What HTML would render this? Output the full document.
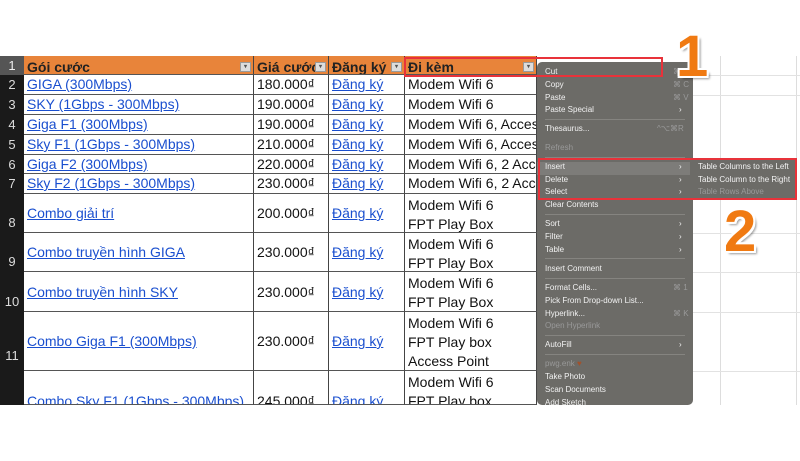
<!DOCTYPE html>
<html><head><meta charset="utf-8"><style>
body{margin:0;width:800px;height:450px;background:#fff;position:relative;overflow:hidden;font-family:"Liberation Sans",sans-serif}
.a{position:absolute}
.sheet{left:0;top:56px;width:800px;height:349px;background:#fff;overflow:hidden}
.rh{background:#1a1a1a;color:#ddd;font-size:13px;text-align:center;left:0;width:24px}
.c{font-size:14px;color:#111;white-space:nowrap;overflow:hidden;box-sizing:border-box;border-right:1px solid #444;border-bottom:1px solid #555;padding-left:3px;line-height:19px}
.l{color:#1a4fcf;text-decoration:underline}
.h{background:#e8843a;font-weight:bold;color:#222}
.menu{left:537px;top:62px;width:156px;height:343px;background:#6c6b67;border-radius:5px;color:#f2f2f2;font-size:8px}
.menu div{position:absolute;left:8px;white-space:nowrap}
.dim{color:#999!important}
.sep{height:1px;background:#858480;left:8px!important;width:140px}
.ar{left:142px!important}
.sc{left:136px!important;color:#999}
.num{position:absolute;font-size:58px;font-weight:bold;color:#f07a12;font-family:"Liberation Sans",sans-serif;line-height:1;
text-shadow:2px 0 #fff,-2px 0 #fff,0 2px #fff,0 -2px #fff,2px 2px #fff,-2px -2px #fff,2px -2px #fff,-2px 2px #fff,3px 3px 2px rgba(0,0,0,.4)}
</style></head><body>
<div class="a sheet">
<div class="a" style="left:720px;top:0;width:1px;height:349px;background:#ddd"></div>
<div class="a" style="left:796px;top:0;width:1px;height:349px;background:#ddd"></div>
<div class="a" style="left:693px;top:19px;width:107px;height:1px;background:#e2e2e2"></div>
<div class="a" style="left:693px;top:39px;width:107px;height:1px;background:#e2e2e2"></div>
<div class="a" style="left:693px;top:177px;width:107px;height:1px;background:#e2e2e2"></div>
<div class="a" style="left:693px;top:216px;width:107px;height:1px;background:#e2e2e2"></div>
<div class="a" style="left:693px;top:256px;width:107px;height:1px;background:#e2e2e2"></div>
<div class="a" style="left:693px;top:315px;width:107px;height:1px;background:#e2e2e2"></div>
</div>
<div id="t"></div>
<script>
var rows=[[56,19,"Gói cước","Giá cước","Đăng ký","Đi kèm",1],
[75,20,"GIGA (300Mbps)","180.000₫","Đăng ký","Modem Wifi 6"],
[95,20,"SKY (1Gbps - 300Mbps)","190.000₫","Đăng ký","Modem Wifi 6"],
[115,20,"Giga F1 (300Mbps)","190.000₫","Đăng ký","Modem Wifi 6, Access Point"],
[135,20,"Sky F1 (1Gbps - 300Mbps)","210.000₫","Đăng ký","Modem Wifi 6, Access Point"],
[155,19,"Giga F2 (300Mbps)","220.000₫","Đăng ký","Modem Wifi 6, 2 Access Point"],
[174,20,"Sky F2 (1Gbps - 300Mbps)","230.000₫","Đăng ký","Modem Wifi 6, 2 Access Point"],
[194,39,"Combo giải trí","200.000₫","Đăng ký","Modem Wifi 6<br>FPT Play Box"],
[233,39,"Combo truyền hình GIGA","230.000₫","Đăng ký","Modem Wifi 6<br>FPT Play Box"],
[272,40,"Combo truyền hình SKY","230.000₫","Đăng ký","Modem Wifi 6<br>FPT Play Box"],
[312,59,"Combo Giga F1 (300Mbps)","230.000₫","Đăng ký","Modem Wifi 6<br>FPT Play box<br>Access Point"],
[371,60,"Combo Sky F1 (1Gbps - 300Mbps)","245.000₫","Đăng ký","Modem Wifi 6<br>FPT Play box<br>Access Point"]];
var cols=[[24,230],[254,75],[329,76],[405,132]];var s="";
rows.forEach(function(r,i){var top=r[0],h=Math.min(r[1],405-r[0]);var hd=r[6];
var pt=(r[1]>20?(r[1]-19)/2:0);
s+='<div class="a rh" style="top:'+top+'px;height:'+h+'px;line-height:'+(r[1]>20?(r[1]*1.5):19)+'px;'+(hd?'background:#555;color:#eee;':'')+'">'+(i+1)+'</div>';
for(var k=0;k<4;k++){var cl="a c"+(hd?" h":"");var txt=r[2+k];
if(!hd&&(k==0||k==2))txt='<span class="l">'+txt+'</span>';
var p=(k==3||hd)?2:pt;
if(k==3&&!hd&&r[1]<=20)p=0;
s+='<div class="'+cl+'" style="left:'+cols[k][0]+'px;top:'+top+'px;width:'+cols[k][1]+'px;height:'+h+'px;padding-top:'+p+'px">'+txt+(hd?'<span style="position:absolute;right:2px;top:6px;width:9px;height:8px;background:#ddd;border:1px solid #999;font-size:6px;line-height:8px;text-align:center;color:#555">▾</span>':'')+'</div>';}
});
document.getElementById('t').innerHTML=s;
</script>
<div class="a" style="left:0;top:405px;width:800px;height:45px;background:#fff"></div>
<div class="a menu">
<div style="top:5px">Cut</div><div class="sc" style="top:5px">⌘ X</div>
<div style="top:18px">Copy</div><div class="sc" style="top:18px">⌘ C</div>
<div style="top:31px">Paste</div><div class="sc" style="top:31px">⌘ V</div>
<div style="top:43px">Paste Special</div><div class="ar" style="top:43px">›</div>
<div class="sep" style="top:57px"></div>
<div style="top:62px">Thesaurus...</div><div class="sc" style="top:62px;left:120px!important">^⌥⌘R</div>
<div class="dim" style="top:81px">Refresh</div>
<div class="sep" style="top:95px"></div>
<div style="top:100px;left:0!important;width:156px;height:13px;background:#7d7c79"></div>
<div style="top:100px">Insert</div><div class="ar" style="top:100px">›</div>
<div style="top:113px">Delete</div><div class="ar" style="top:113px">›</div>
<div style="top:125px">Select</div><div class="ar" style="top:125px">›</div>
<div style="top:138px">Clear Contents</div>
<div class="sep" style="top:152px"></div>
<div style="top:157px">Sort</div><div class="ar" style="top:157px">›</div>
<div style="top:170px">Filter</div><div class="ar" style="top:170px">›</div>
<div style="top:183px">Table</div><div class="ar" style="top:183px">›</div>
<div class="sep" style="top:196px"></div>
<div style="top:202px">Insert Comment</div>
<div class="sep" style="top:216px"></div>
<div style="top:221px">Format Cells...</div><div class="sc" style="top:221px">⌘ 1</div>
<div style="top:234px">Pick From Drop-down List...</div>
<div style="top:247px">Hyperlink...</div><div class="sc" style="top:247px">⌘ K</div>
<div class="dim" style="top:259px">Open Hyperlink</div>
<div class="sep" style="top:273px"></div>
<div style="top:278px">AutoFill</div><div class="ar" style="top:278px">›</div>
<div class="sep" style="top:292px"></div>
<div class="dim" style="top:297px">pwg.enk <span style="color:#a0522d">♥</span></div>
<div style="top:310px">Take Photo</div>
<div style="top:323px">Scan Documents</div>
<div style="top:336px">Add Sketch</div>
</div>
<div class="a" style="left:690px;top:158px;width:107px;height:42px;background:#6c6b67;border-radius:4px;color:#f2f2f2;font-size:8px">
<div class="a" style="left:8px;top:4px">Table Columns to the Left</div>
<div class="a" style="left:8px;top:17px">Table Column to the Right</div>
<div class="a" style="left:8px;top:29px;color:#999">Table Rows Above</div>
</div>
<div class="a" style="left:404px;top:57px;width:259px;height:20px;border:2px solid #e8323a;box-sizing:border-box"></div>
<div class="a" style="left:538px;top:158px;width:259px;height:42px;border:2px solid #e8323a;box-sizing:border-box"></div>
<div class="num" style="left:676px;top:28px">1</div>
<div class="num" style="left:724px;top:203px">2</div>
</body></html>
